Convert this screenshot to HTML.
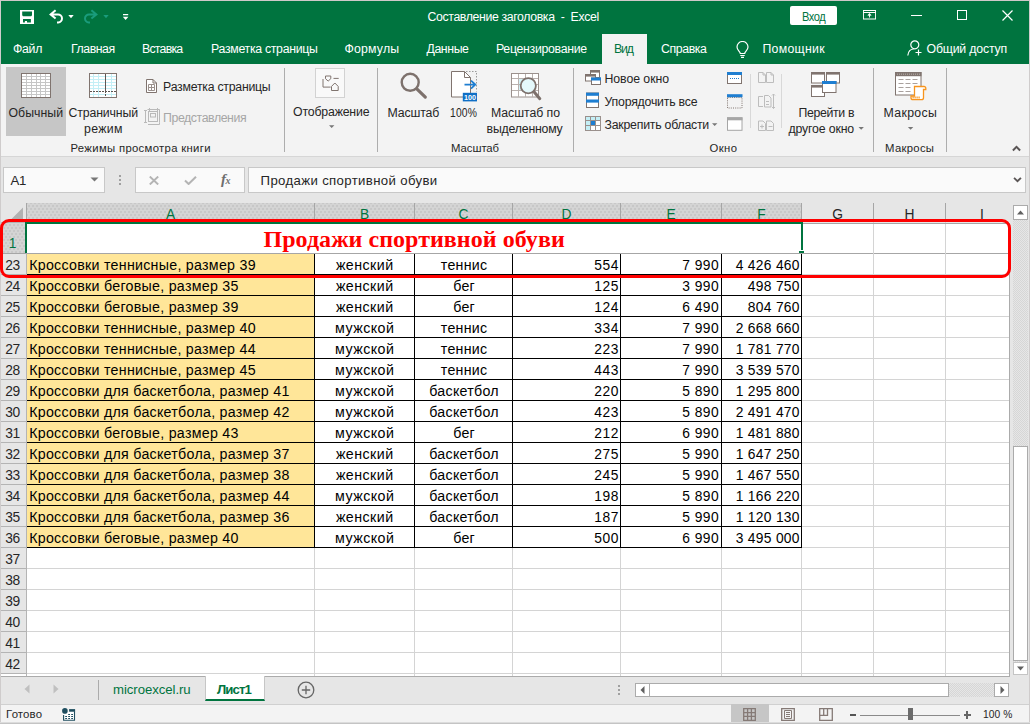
<!DOCTYPE html>
<html lang="ru"><head><meta charset="utf-8"><title>Составление заголовка - Excel</title>
<style>
html,body{margin:0;padding:0;}
body{width:1030px;height:724px;position:relative;overflow:hidden;background:#e6e6e6;font-family:"Liberation Sans",sans-serif;font-size:12.3px;color:#262626;}
.a,.t,svg{position:absolute;}
.t{white-space:nowrap;line-height:1;z-index:4;}
.a{box-sizing:border-box;}
#titlebar{left:0;top:0;width:1030px;height:64px;background:#00743f;}
#wb-top{left:0;top:0;width:1030px;height:1px;background:#cfc9c9;}
#wb-left{left:0;top:0;width:1px;height:724px;background:#cfcccc;}
#ribbon{left:0;top:64px;width:1030px;height:93px;background:#f3f3f3;border-bottom:1px solid #d6d6d6;}
#fbar{left:0;top:157px;width:1030px;height:47px;background:#e6e6e6;}
.vsep{width:1px;background:#adadad;top:68px;height:84px;}
.vsep2{width:1px;background:#d8d8d8;top:74px;height:54px;}
.box{background:#fff;border:1px solid #c8c8c8;}
.fb{background:#fafafa;}
/* grid */
.c{position:absolute;box-sizing:border-box;height:20px;line-height:23.2px;font-size:13.8px;letter-spacing:0.27px;color:#000;white-space:nowrap;overflow:hidden;transform:scaleX(1.03);}
.ca{left:27px;width:287px;padding-left:2.100px;transform-origin:0 0;}
.cb{left:315px;width:99px;text-align:center;text-indent:0.500px;letter-spacing:0.450px;}
.cc{left:415px;width:97px;text-align:center;text-indent:1.200px;}
.cd{left:513px;width:107px;text-align:right;padding-right:1.200px;letter-spacing:0.500px;transform:none;}
.ce{left:621px;width:100px;text-align:right;padding-right:1.800px;letter-spacing:0.500px;transform:none;}
.cf{left:722px;width:79px;text-align:right;padding-right:1.200px;letter-spacing:0.300px;transform:none;}
.rh{position:absolute;left:1px;width:23px;height:20px;line-height:23.2px;text-align:center;font-size:13.8px;color:#262626;letter-spacing:-0.3px;}
.ch{position:absolute;height:16px;line-height:23.4px;text-align:center;font-size:13.8px;overflow:hidden;}
.hl{position:absolute;height:1px;background:#d4d4d4;}
.vl{position:absolute;width:1px;background:#d4d4d4;}
.bl{background:#000;}
.dz{background-color:#d4d4d4;background-image:radial-gradient(circle,#bebebe 0.55px,rgba(190,190,190,0) 0.9px),radial-gradient(circle,#bebebe 0.55px,rgba(190,190,190,0) 0.9px);background-size:4px 6px,4px 6px;background-position:0 0,2px 3px;}
.dt{background:repeating-conic-gradient(#d6d6d6 0% 25%,#e6e6e6 0% 50%) 0 0/2px 2px;}

</style></head>
<body>
<!-- title bar + tab strip -->
<div class="a" id="titlebar"></div>
<div class="a" id="wb-top"></div>
<!-- quick access toolbar icons -->
<svg style="left:20px;top:10px" width="14" height="14" viewBox="20 10 14 14"><path fill="#fff" fill-rule="evenodd" d="M20 10h14v14h-14zM22.200 11.600v3.600l0.800 1.100h8.200l0.800-1.100v-3.600zM23 19.100v3.500h1.900v-1.600h2.100v1.600h3.900v-3.500z"/></svg>
<svg style="left:47px;top:8px" width="18" height="17" viewBox="47 8 18 17" fill="none" stroke="#fff" stroke-width="2"><path d="M55.600 10.200l-5 4.200 5 4.200M51 14.400h6.800a4 4 0 0 1 0.400 8h-1.200"/></svg>
<svg style="left:68px;top:15px" width="6" height="4" viewBox="0 0 6 4"><path d="M0.300 0h5.400L3 3.200z" fill="#fff"/></svg>
<svg style="left:83px;top:8px" width="18" height="17" viewBox="83 8 18 17" fill="none" stroke="#1a9c7c" stroke-width="2"><path d="M91.400 10.200l5 4.200-5 4.200M96 14.400h-6.800a4 4 0 0 0-0.400 8h1.200"/></svg>
<svg style="left:103px;top:15px" width="6" height="4" viewBox="0 0 6 4"><path d="M0.300 0h5.400L3 3.200z" fill="#1a9c7c"/></svg>
<svg style="left:122px;top:13px" width="7" height="8" viewBox="0 0 7 8"><path d="M1 1h5.200v1.300H1zM0.800 3.700h5.600L3.600 7z" fill="#fff"/></svg>
<!-- sign-in button -->
<div class="a" style="left:790px;top:6px;width:47px;height:19px;background:#fff;border-radius:2px;"></div>
<!-- window controls -->
<svg style="left:863px;top:10px" width="13" height="9.500" viewBox="0 0 15 10" preserveAspectRatio="none" fill="none" stroke="#fff" stroke-width="1.1"><path d="M0.5 0.5h14v9h-14zM0.500 2.6h14"/><path d="M7.500 8V4.300M5.600 5.900l1.900-1.900 1.900 1.900"/></svg>
<div class="a" style="left:911px;top:15px;width:11px;height:1.3px;background:#fff;"></div>
<div class="a" style="left:957px;top:10px;width:10px;height:10px;border:1.2px solid #fff;"></div>
<svg style="left:1002px;top:10px" width="11" height="11" viewBox="0 0 11 11" stroke="#fff" stroke-width="1.2"><path d="M0.500 0.500l10 10M10.500 0.500l-10 10"/></svg>
<!-- active tab -->
<div class="a" style="left:602px;top:34px;width:45px;height:31px;background:#f3f3f3;"></div>
<!-- lightbulb + share icons -->
<svg style="left:736px;top:41px" width="13" height="17" viewBox="0 0 13 17" fill="none" stroke="#fff" stroke-width="1.2"><path d="M4.300 12.500c0-2-3.300-3.300-3.300-6.500a5.500 5.500 0 0 1 11 0c0 3.200-3.300 4.500-3.300 6.500zM4.300 14.500h4.400M5 16.400h3"/></svg>
<svg style="left:907px;top:40px" width="16" height="16" viewBox="0 0 16 16" fill="none" stroke="#fff" stroke-width="1.2"><circle cx="7.800" cy="4.800" r="4"/><path d="M0.800 15.500c0.500-4 3-6.500 6-6.500M11.500 9.500v6M8.500 12.500h6"/></svg>
<!-- ribbon -->
<div class="a" id="ribbon"></div>
<div class="a" style="left:6px;top:67px;width:60px;height:69px;background:#c6c6c6;"></div>
<div class="a vsep" style="left:284px;"></div>
<div class="a vsep" style="left:377px;"></div>
<div class="a vsep" style="left:573px;"></div>
<div class="a vsep" style="left:873px;"></div>
<div class="a vsep" style="left:946px;"></div>
<div class="a vsep2" style="left:750px;"></div>
<div class="a vsep2" style="left:781px;"></div>
<svg style="left:0;top:64px" width="1030" height="93" viewBox="0 64 1030 93" fill="none">
<!-- normal view -->
<rect x="21.500" y="73.500" width="29" height="24" fill="#fff" stroke="#80746f"/>
<path d="M26.500 74v23M31.500 74v23M36.500 74v23M40.500 74v23M45.500 74v23M22 76.500h28M22 79.500h28M22 82.500h28M22 85.500h28M22 88.500h28M22 91.500h28M22 94.500h28" stroke="#c6c6c6"/>
<!-- page break view -->
<rect x="89.500" y="73.500" width="27" height="24" fill="#fff" stroke="#80746f"/>
<path d="M93.500 74v23M98.500 74v23M111.500 74v23M90 76.500h26M90 79.500h26M90 82.500h26M90 85.500h26M90 88.500h26M90 94.500h26" stroke="#c4eff6"/>
<path d="M105.500 74v17" stroke="#5f5551"/>
<path d="M105.500 91v6M90 91.500h26" stroke="#5f5551" stroke-dasharray="2 1"/>
<!-- page layout small -->
<path d="M146.500 79.500h6.500l3.500 3.500v9.500h-10z" fill="#fff" stroke="#80746f"/>
<path d="M153 79.500v3.500h3.500" stroke="#80746f"/>
<path d="M148.500 84.500h6v6h-6zM151.500 84.500v6M148.500 87.500h6" stroke="#9a908c"/>
<!-- custom views (disabled) -->
<g stroke="#b9b9b9"><rect x="148.500" y="111.500" width="9" height="10"/><rect x="150.500" y="113.500" width="5" height="3.500"/><path d="M145.500 110.500v12M144 110.500h3M144 122.500h3M147.500 109.500h12v13M149.500 108v3M157.500 108v3M148 124.500h11.500v-2"/></g>
<!-- show -->
<rect x="315.500" y="68.500" width="29" height="29" fill="#f9f9f9" stroke="#d2d2d2"/>
<path d="M325.500 76h5.300v2.700l-2.650 2.400-2.650-2.400zM333.500 78.400h5.200M323 79v8.100h7.600M331.500 90.500v-4.100l3.350-3.400 3.350 3.400v4.100z" stroke="#80746f"/>
<!-- zoom -->
<circle cx="410.200" cy="82.300" r="8.500" stroke="#7d716c" stroke-width="2.400"/>
<path d="M416.800 88.800l8.500 8.300" stroke="#7d716c" stroke-width="3.200" stroke-linecap="round"/>
<!-- 100% -->
<path d="M466 71.500h10.500v20" stroke="#9a9a9a" stroke-dasharray="1.500 1.500"/>
<path d="M451.500 71.500h13l6 6v19.500h-19z" fill="#fff" stroke="#80746f"/>
<path d="M464.500 71.500v6h6" stroke="#80746f"/>
<path d="M464.500 84.600h10.500M471 80.600l4.300 4-4.300 4" stroke="#1e7ed1" stroke-width="1.800"/>
<rect x="462.800" y="92.800" width="14.200" height="8.600" fill="#0f6fc6"/>
<text x="469.900" y="99.700" font-family="'Liberation Sans',sans-serif" font-size="7.200" font-weight="bold" fill="#fff" text-anchor="middle">100</text>
<!-- zoom to selection -->
<rect x="511.500" y="73.500" width="27" height="23.500" fill="#fff" stroke="#9a908c"/>
<rect x="519" y="79" width="13" height="11" fill="#d4f3f8"/>
<path d="M518.500 74v23M525.500 74v23M532.500 74v23M512 78.500h26M512 84.500h26M512 90.500h26" stroke="#b8b1ae"/>
<circle cx="528.300" cy="85.700" r="7.600" fill="#e4f8fb" stroke="#7d716c" stroke-width="1.800"/>
<path d="M534 91.700l5.800 7" stroke="#7d716c" stroke-width="3" stroke-linecap="round"/>
<!-- new window -->
<rect x="590.500" y="70.500" width="9" height="7" fill="#fff" stroke="#80746f"/><rect x="590" y="70" width="10" height="2.600" fill="#80746f"/>
<rect x="585.500" y="74.500" width="10" height="6.500" fill="#fff" stroke="#80746f"/><rect x="585" y="74" width="11" height="2.600" fill="#80746f"/>
<rect x="591.500" y="78" width="9" height="6.500" fill="#fff" stroke="#80746f"/><rect x="591" y="77.500" width="10" height="3" fill="#1e7ed1"/>
<!-- arrange all -->
<rect x="586.500" y="93" width="12" height="14.500" fill="#fff" stroke="#80746f"/><rect x="586" y="92.700" width="13" height="3.100" fill="#1e7ed1"/><rect x="586" y="99.500" width="13" height="3.100" fill="#1e7ed1"/>
<!-- freeze panes -->
<rect x="585.500" y="116.500" width="15" height="14" fill="#fff" stroke="#9a908c"/>
<path d="M586 117h14v3.500h-14zM586 120.500h4.500v9.500h-4.500z" fill="#c4eff6"/>
<rect x="591" y="121" width="4.500" height="4.500" fill="#1e7ed1"/>
<path d="M590.500 117v13M595.500 117v13M586 120.500h14M586 125.500h14" stroke="#9a908c"/>
<!-- split / hide / unhide -->
<rect x="727.500" y="72.500" width="14" height="11" fill="#fff" stroke="#80746f"/><rect x="727" y="72" width="15" height="3" fill="#1e7ed1"/><path d="M730 78.500h10" stroke="#1e7ed1" stroke-dasharray="1 1"/>
<rect x="727.500" y="97.500" width="14.500" height="10.500" stroke="#80746f" stroke-dasharray="1 1.200"/><rect x="727" y="94.200" width="15.500" height="3" fill="#1e7ed1"/>
<rect x="727.500" y="117.800" width="14.500" height="12.500" fill="#fff" stroke="#a6a6a6"/><rect x="727" y="117.300" width="15.500" height="3" fill="#a6a6a6"/>
<!-- side by side / sync / reset (disabled) -->
<g stroke="#bdbdbd"><path d="M758.500 72.500h4.500l2.500 2.500v7.500h-7zM766.500 72.500h4.500l2.500 2.500v7.500h-7zM763 72.500v2.500h2.500M771 72.500v2.500h2.500"/>
<path d="M763 96.500h-4.500v10h4.500M764.500 95.500h4l2.500 2.500v9h-6.500zM773.500 94v14.500M772 95.500l1.500-1.500 1.500 1.500M772 107l1.500 1.500 1.500-1.500M766 101.500h3M766 104.500h3"/>
<path d="M758.500 121h4.500l2.500 2.500v7h-7zM766.500 121h4.500l2.500 2.500v7h-7zM760 126.500h4M762 124.500v4M768.500 126.500h4"/></g>
<!-- switch windows -->
<rect x="811.500" y="72.500" width="13" height="10.500" fill="#fff" stroke="#80746f"/><rect x="811" y="72" width="14" height="2.600" fill="#80746f"/>
<rect x="826.500" y="72.500" width="13" height="10.500" fill="#fff" stroke="#80746f"/><rect x="826" y="72" width="14" height="2.600" fill="#80746f"/>
<rect x="811.500" y="85.500" width="13" height="11" fill="#fff" stroke="#80746f"/><rect x="811" y="85" width="14" height="2.600" fill="#80746f"/>
<rect x="822.500" y="81.500" width="13.500" height="11" fill="#fff" stroke="#80746f"/><rect x="822" y="81" width="14.500" height="3" fill="#1e7ed1"/>
<!-- macros -->
<rect x="895.500" y="72.500" width="25.500" height="22.500" fill="#fff" stroke="#80746f"/><rect x="895" y="72" width="26.500" height="4.200" fill="#80746f"/>
<path d="M897 74.200h23" stroke="#b8b1ae" stroke-dasharray="1 1"/>
<path d="M898.500 79.500h5M905.500 79.500h5M912.500 79.500h5M898.500 83.500h5M905.500 83.500h5M912.500 83.500h5M898.500 87.500h5M905.500 87.500h5M898.500 91.500h5M905.500 91.500h5" stroke="#a9a19e"/>
<path d="M914.500 86.500h9.500a1.800 1.800 0 0 1 1.800 1.800v1.200h-2.300v8.200a2 2 0 0 1-2 2h-8.500a2 2 0 0 1-2-2v-1.700h3.500z" fill="#fff" stroke="#f7941d" stroke-width="1.300"/>
<path d="M912.500 97.600h8" stroke="#f7941d" stroke-width="2" stroke-dasharray="1.200 0.800"/>
<!-- dropdown arrows -->
<path d="M329 125.200h5.400l-2.700 2.900zM712 123.200h5.400l-2.700 2.900zM858.500 126.900h5.400l-2.700 2.900zM907.900 126.900h5.400l-2.700 2.900z" fill="#777"/>
</svg>

<!-- formula bar -->
<div class="a" id="fbar"></div>
<div class="a box fb" style="left:3px;top:167px;width:102px;height:26px;"></div>
<svg style="left:90px;top:177px" width="9" height="5" viewBox="0 0 9 5"><path d="M0.500 0.500h8L4.500 4.500z" fill="#777"/></svg>
<div class="a" style="left:119px;top:175px;width:2px;height:2px;background:#a0a0a0;box-shadow:0 4px 0 #a0a0a0,0 8px 0 #a0a0a0;"></div>
<div class="a box fb" style="left:135px;top:167px;width:110px;height:26px;"></div>
<svg style="left:149px;top:176px" width="10" height="9" viewBox="0 0 10 9" stroke="#b4b4b4" stroke-width="1.900"><path d="M0.800 0.500l8.400 8M9.200 0.500l-8.400 8"/></svg>
<svg style="left:184px;top:176px" width="13" height="9" viewBox="0 0 13 9" fill="none" stroke="#b4b4b4" stroke-width="2"><path d="M1 4.500l3.600 3.500L12 0.800"/></svg>
<span class="t" style="left:221px;top:171.500px;font-family:'Liberation Serif',serif;font-style:italic;font-weight:bold;font-size:15px;color:#6e6e6e;letter-spacing:-0.500px;">f<span style="font-size:10px;">x</span></span>
<div class="a box fb" style="left:248px;top:167px;width:778px;height:26px;"></div>
<svg style="left:1013px;top:177px" width="9" height="6" viewBox="0 0 10 7" fill="none" stroke="#5a5555" stroke-width="2.200"><path d="M1 1l4 4 4-4"/></svg>
<!-- collapse ribbon chevron -->
<svg style="left:1012px;top:145px" width="9" height="6.500" viewBox="0 0 10 7" fill="none" stroke="#5a5555" stroke-width="2.200"><path d="M1 6l4-4 4 4"/></svg>
<!-- vertical scrollbar -->
<div class="a" style="left:1010px;top:204px;width:20px;height:472px;background:#e6e6e6;"></div>
<div class="a dt" style="left:1013px;top:220px;width:15px;height:442px;"></div>
<div class="a box" style="left:1013px;top:205px;width:15px;height:15px;border-color:#ababab;"></div>
<svg style="left:1017px;top:210px" width="7" height="5" viewBox="0 0 7 5"><path d="M0 4.500h7L3.500 0.500z" fill="#606060"/></svg>
<div class="a box" style="left:1013px;top:446px;width:15px;height:215px;border-color:#ababab;"></div>
<div class="a box" style="left:1013px;top:662px;width:15px;height:13px;border-color:#c4c4c4;"></div>
<svg style="left:1017px;top:666px" width="7" height="5" viewBox="0 0 7 5"><path d="M0 0.500h7L3.500 4.500z" fill="#606060"/></svg>
<!-- sheet tab bar -->
<div class="a" style="left:0;top:677px;width:1030px;height:27px;background:#e6e6e6;"></div>
<svg style="left:24px;top:684px" width="6" height="10" viewBox="0 0 6 10"><path d="M5.500 0.500v9L0.500 5z" fill="#c0c0c0"/></svg>
<svg style="left:53px;top:684px" width="6" height="10" viewBox="0 0 6 10"><path d="M0.500 0.500v9L5.500 5z" fill="#c0c0c0"/></svg>
<div class="a" style="left:98px;top:680px;width:1px;height:20px;background:#ababab;"></div>
<div class="a" style="left:205px;top:676px;width:60px;height:25px;z-index:3;background:#fff;border-bottom:2.600px solid #00743f;border-left:1px solid #c6c6c6;border-right:1px solid #c6c6c6;"></div>
<svg style="left:297px;top:681px" width="18" height="18" viewBox="0 0 18 18" fill="none" stroke="#666" stroke-width="1.300"><circle cx="9" cy="9" r="7.800"/><path d="M9 4.800v8.400M4.800 9h8.400"/></svg>
<!-- horizontal scrollbar -->
<div class="a" style="left:618px;top:685px;width:2px;height:2px;background:#a0a0a0;box-shadow:0 4px 0 #a0a0a0,0 8px 0 #a0a0a0;"></div>
<div class="a dt" style="left:649px;top:683px;width:346px;height:14px;"></div>
<div class="a box" style="left:635px;top:683px;width:15px;height:14px;border-color:#ababab;"></div>
<svg style="left:640px;top:686px" width="5" height="8" viewBox="0 0 5 8"><path d="M4.500 0v8L0.500 4z" fill="#606060"/></svg>
<div class="a box" style="left:649px;top:683px;width:300px;height:14px;border-color:#ababab;"></div>
<div class="a box" style="left:994px;top:683px;width:15px;height:14px;border-color:#ababab;"></div>
<svg style="left:1000px;top:686px" width="5" height="8" viewBox="0 0 5 8"><path d="M0.500 0v8L4.500 4z" fill="#606060"/></svg>
<!-- status bar -->
<div class="a" style="left:0;top:704px;width:1030px;height:20px;background:#f3f3f3;border-top:1px solid #d0d0d0;"></div>
<div class="a" style="left:731px;top:704px;width:38px;height:20px;background:#c6c6c6;"></div>
<svg style="left:62px;top:708px" width="14" height="13" viewBox="62 708 14 13"><path d="M63 712h12v8.500h-12z" fill="#fff"/><circle cx="64.900" cy="710.900" r="2.800" fill="#1f4e5f"/><path d="M69.100 709.100h6v2.600h-6z" fill="#1f4e5f"/><path d="M63.600 715v5.200h10.900v-9" fill="none" stroke="#1f4e5f" stroke-width="1.100"/><path d="M68.200 714.500h1.800M71.200 714.500h1.800M65.200 716.500h1.800M68.200 716.500h1.800M71.200 716.500h1.800M65.200 718.500h1.800M68.200 718.500h1.800M71.200 718.500h1.800" stroke="#1f4e5f" stroke-width="1"/></svg>
<svg style="left:743px;top:708px" width="13" height="13" viewBox="0 0 13 13" fill="none" stroke="#857a76" stroke-width="1.300"><path d="M0.700 0.700h11.600v11.600h-11.600zM4.600 0.700v11.600M8.400 0.700v11.600M0.700 4.600h11.600M0.700 8.400h11.600"/></svg>
<svg style="left:781px;top:708px" width="14" height="13" viewBox="0 0 14 13" fill="none" stroke="#857a76" stroke-width="1.300"><path d="M0.700 0.700h12.600v11.600h-12.600z"/><path d="M3.500 2.500h7v8h-7zM5 4.500h4M5 6.500h4M5 8.500h4" stroke-width="1"/></svg>
<svg style="left:819px;top:708px" width="14" height="13" viewBox="0 0 14 13" fill="none" stroke="#857a76" stroke-width="1.300"><path d="M0.700 0.700h12.600v11.600h-12.600zM0.700 7.300h7.800v-6.600M4.700 0.700v6.600"/></svg>
<div class="a" style="left:850px;top:714px;width:6px;height:2px;background:#555;"></div>
<div class="a" style="left:860px;top:715px;width:100px;height:1px;background:#8a8a8a;"></div>
<div class="a" style="left:908px;top:708px;width:5px;height:12px;background:#6b6b6b;"></div>
<div class="a" style="left:963.500px;top:714.200px;width:7.500px;height:1.600px;background:#666;"></div>
<div class="a" style="left:966.400px;top:711.200px;width:1.600px;height:7.700px;background:#666;"></div>


<!-- sheet -->
<div class="a" style="left:0;top:204px;width:1010px;height:473px;background:#fff;"></div>
<div class="a" style="left:0;top:203px;width:1010px;height:20px;background:#e6e6e6;"></div>
<div class="a dz" style="left:27px;top:203px;width:774px;height:19px;"></div>
<div class="a" style="left:0;top:222px;width:26px;height:452px;background:#e6e6e6;"></div>
<div class="a dz" style="left:0;top:222px;width:26px;height:31px;"></div>
<svg style="left:11px;top:207px" width="12" height="12" viewBox="0 0 12 12"><path d="M12 0.500V12H0.500Z" fill="#b2b2b2"/></svg>
<div class="a" style="left:27px;top:254px;width:287px;height:293px;background:#ffe699;"></div>
<div class="hl" style="left:0;top:253px;width:26px;background:#b4b4b4;"></div>
<div class="hl" style="left:0;top:253px;width:1010px;background:#a6a6a6;"></div>
<div class="hl" style="left:0;top:274px;width:26px;background:#b4b4b4;"></div>
<div class="hl bl" style="left:27px;top:274px;width:775px;"></div>
<div class="hl" style="left:802px;top:274px;width:208px;"></div>
<div class="hl" style="left:0;top:295px;width:26px;background:#b4b4b4;"></div>
<div class="hl bl" style="left:27px;top:295px;width:775px;"></div>
<div class="hl" style="left:802px;top:295px;width:208px;"></div>
<div class="hl" style="left:0;top:316px;width:26px;background:#b4b4b4;"></div>
<div class="hl bl" style="left:27px;top:316px;width:775px;"></div>
<div class="hl" style="left:802px;top:316px;width:208px;"></div>
<div class="hl" style="left:0;top:337px;width:26px;background:#b4b4b4;"></div>
<div class="hl bl" style="left:27px;top:337px;width:775px;"></div>
<div class="hl" style="left:802px;top:337px;width:208px;"></div>
<div class="hl" style="left:0;top:358px;width:26px;background:#b4b4b4;"></div>
<div class="hl bl" style="left:27px;top:358px;width:775px;"></div>
<div class="hl" style="left:802px;top:358px;width:208px;"></div>
<div class="hl" style="left:0;top:379px;width:26px;background:#b4b4b4;"></div>
<div class="hl bl" style="left:27px;top:379px;width:775px;"></div>
<div class="hl" style="left:802px;top:379px;width:208px;"></div>
<div class="hl" style="left:0;top:400px;width:26px;background:#b4b4b4;"></div>
<div class="hl bl" style="left:27px;top:400px;width:775px;"></div>
<div class="hl" style="left:802px;top:400px;width:208px;"></div>
<div class="hl" style="left:0;top:421px;width:26px;background:#b4b4b4;"></div>
<div class="hl bl" style="left:27px;top:421px;width:775px;"></div>
<div class="hl" style="left:802px;top:421px;width:208px;"></div>
<div class="hl" style="left:0;top:442px;width:26px;background:#b4b4b4;"></div>
<div class="hl bl" style="left:27px;top:442px;width:775px;"></div>
<div class="hl" style="left:802px;top:442px;width:208px;"></div>
<div class="hl" style="left:0;top:463px;width:26px;background:#b4b4b4;"></div>
<div class="hl bl" style="left:27px;top:463px;width:775px;"></div>
<div class="hl" style="left:802px;top:463px;width:208px;"></div>
<div class="hl" style="left:0;top:484px;width:26px;background:#b4b4b4;"></div>
<div class="hl bl" style="left:27px;top:484px;width:775px;"></div>
<div class="hl" style="left:802px;top:484px;width:208px;"></div>
<div class="hl" style="left:0;top:505px;width:26px;background:#b4b4b4;"></div>
<div class="hl bl" style="left:27px;top:505px;width:775px;"></div>
<div class="hl" style="left:802px;top:505px;width:208px;"></div>
<div class="hl" style="left:0;top:526px;width:26px;background:#b4b4b4;"></div>
<div class="hl bl" style="left:27px;top:526px;width:775px;"></div>
<div class="hl" style="left:802px;top:526px;width:208px;"></div>
<div class="hl" style="left:0;top:547px;width:26px;background:#b4b4b4;"></div>
<div class="hl bl" style="left:27px;top:547px;width:775px;"></div>
<div class="hl" style="left:802px;top:547px;width:208px;"></div>
<div class="hl" style="left:0;top:568px;width:26px;background:#b4b4b4;"></div>
<div class="hl" style="left:27px;top:568px;width:983px;"></div>
<div class="hl" style="left:0;top:589px;width:26px;background:#b4b4b4;"></div>
<div class="hl" style="left:27px;top:589px;width:983px;"></div>
<div class="hl" style="left:0;top:610px;width:26px;background:#b4b4b4;"></div>
<div class="hl" style="left:27px;top:610px;width:983px;"></div>
<div class="hl" style="left:0;top:631px;width:26px;background:#b4b4b4;"></div>
<div class="hl" style="left:27px;top:631px;width:983px;"></div>
<div class="hl" style="left:0;top:652px;width:26px;background:#b4b4b4;"></div>
<div class="hl" style="left:27px;top:652px;width:983px;"></div>
<div class="hl" style="left:0;top:673px;width:26px;background:#b4b4b4;"></div>
<div class="hl" style="left:27px;top:673px;width:983px;"></div>
<div class="vl" style="left:26px;top:203px;height:19px;background:#a6a6a6;"></div>
<div class="vl" style="left:26px;top:222px;height:454px;background:#b4b4b4;"></div>
<div class="vl" style="left:314px;top:203px;height:19px;background:#a6a6a6;"></div>
<div class="vl bl" style="left:314px;top:254px;height:294px;"></div>
<div class="vl" style="left:314px;top:548px;height:128px;"></div>
<div class="vl" style="left:414px;top:203px;height:19px;background:#a6a6a6;"></div>
<div class="vl bl" style="left:414px;top:254px;height:294px;"></div>
<div class="vl" style="left:414px;top:548px;height:128px;"></div>
<div class="vl" style="left:512px;top:203px;height:19px;background:#a6a6a6;"></div>
<div class="vl bl" style="left:512px;top:254px;height:294px;"></div>
<div class="vl" style="left:512px;top:548px;height:128px;"></div>
<div class="vl" style="left:620px;top:203px;height:19px;background:#a6a6a6;"></div>
<div class="vl bl" style="left:620px;top:254px;height:294px;"></div>
<div class="vl" style="left:620px;top:548px;height:128px;"></div>
<div class="vl" style="left:721px;top:203px;height:19px;background:#a6a6a6;"></div>
<div class="vl bl" style="left:721px;top:254px;height:294px;"></div>
<div class="vl" style="left:721px;top:548px;height:128px;"></div>
<div class="vl" style="left:801px;top:203px;height:19px;background:#a6a6a6;"></div>
<div class="vl bl" style="left:801px;top:254px;height:294px;"></div>
<div class="vl" style="left:801px;top:548px;height:128px;"></div>
<div class="vl" style="left:873px;top:203px;height:19px;background:#a6a6a6;"></div>
<div class="vl" style="left:873px;top:222px;height:454px;"></div>
<div class="vl" style="left:945px;top:203px;height:19px;background:#a6a6a6;"></div>
<div class="vl" style="left:945px;top:222px;height:454px;"></div>
<div class="vl" style="left:1009px;top:223px;height:453px;background:#ababab;"></div>
<div class="hl" style="left:0;top:676px;width:1010px;background:#ababab;"></div>
<div class="hl" style="left:803px;top:223px;width:207px;background:#a6a6a6;"></div>
<div class="hl" style="left:0;top:222px;width:25px;background:#b4b4b4;"></div>
<div class="a" style="left:25px;top:222px;width:778px;height:2px;background:#00743f;"></div>
<div class="a" style="left:25px;top:222px;width:2px;height:31px;background:#00743f;"></div>
<div class="a" style="left:801px;top:222px;width:2px;height:28px;background:#00743f;"></div>
<div class="a" style="left:799px;top:251px;width:5px;height:2px;background:#00743f;"></div>
<div class="ch" style="left:27px;top:203px;width:287px;color:#00743f;">A</div>
<div class="ch" style="left:315px;top:203px;width:99px;color:#00743f;">B</div>
<div class="ch" style="left:415px;top:203px;width:97px;color:#00743f;">C</div>
<div class="ch" style="left:513px;top:203px;width:107px;color:#00743f;">D</div>
<div class="ch" style="left:621px;top:203px;width:100px;color:#00743f;">E</div>
<div class="ch" style="left:722px;top:203px;width:79px;color:#00743f;">F</div>
<div class="ch" style="left:802px;top:203px;width:71px;color:#262626;">G</div>
<div class="ch" style="left:874px;top:203px;width:71px;color:#262626;">H</div>
<div class="ch" style="left:946px;top:203px;width:72px;color:#262626;">I</div>
<div class="rh" style="top:232px;color:#00743f;">1</div>
<div class="rh" style="top:254px;">23</div>
<div class="rh" style="top:275px;">24</div>
<div class="rh" style="top:296px;">25</div>
<div class="rh" style="top:317px;">26</div>
<div class="rh" style="top:338px;">27</div>
<div class="rh" style="top:359px;">28</div>
<div class="rh" style="top:380px;">29</div>
<div class="rh" style="top:401px;">30</div>
<div class="rh" style="top:422px;">31</div>
<div class="rh" style="top:443px;">32</div>
<div class="rh" style="top:464px;">33</div>
<div class="rh" style="top:485px;">34</div>
<div class="rh" style="top:506px;">35</div>
<div class="rh" style="top:527px;">36</div>
<div class="rh" style="top:548px;">37</div>
<div class="rh" style="top:569px;">38</div>
<div class="rh" style="top:590px;">39</div>
<div class="rh" style="top:611px;">40</div>
<div class="rh" style="top:632px;">41</div>
<div class="rh" style="top:653px;">42</div>
<div class="c ca" style="top:254px;">Кроссовки теннисные, размер 39</div>
<div class="c cb" style="top:254px;">женский</div>
<div class="c cc" style="top:254px;">теннис</div>
<div class="c cd" style="top:254px;">554</div>
<div class="c ce" style="top:254px;">7 990</div>
<div class="c cf" style="top:254px;">4 426 460</div>
<div class="c ca" style="top:275px;">Кроссовки беговые, размер 35</div>
<div class="c cb" style="top:275px;">женский</div>
<div class="c cc" style="top:275px;">бег</div>
<div class="c cd" style="top:275px;">125</div>
<div class="c ce" style="top:275px;">3 990</div>
<div class="c cf" style="top:275px;">498 750</div>
<div class="c ca" style="top:296px;">Кроссовки беговые, размер 39</div>
<div class="c cb" style="top:296px;">женский</div>
<div class="c cc" style="top:296px;">бег</div>
<div class="c cd" style="top:296px;">124</div>
<div class="c ce" style="top:296px;">6 490</div>
<div class="c cf" style="top:296px;">804 760</div>
<div class="c ca" style="top:317px;">Кроссовки теннисные, размер 40</div>
<div class="c cb" style="top:317px;">мужской</div>
<div class="c cc" style="top:317px;">теннис</div>
<div class="c cd" style="top:317px;">334</div>
<div class="c ce" style="top:317px;">7 990</div>
<div class="c cf" style="top:317px;">2 668 660</div>
<div class="c ca" style="top:338px;">Кроссовки теннисные, размер 44</div>
<div class="c cb" style="top:338px;">мужской</div>
<div class="c cc" style="top:338px;">теннис</div>
<div class="c cd" style="top:338px;">223</div>
<div class="c ce" style="top:338px;">7 990</div>
<div class="c cf" style="top:338px;">1 781 770</div>
<div class="c ca" style="top:359px;">Кроссовки теннисные, размер 45</div>
<div class="c cb" style="top:359px;">мужской</div>
<div class="c cc" style="top:359px;">теннис</div>
<div class="c cd" style="top:359px;">443</div>
<div class="c ce" style="top:359px;">7 990</div>
<div class="c cf" style="top:359px;">3 539 570</div>
<div class="c ca" style="top:380px;">Кроссовки для баскетбола, размер 41</div>
<div class="c cb" style="top:380px;">мужской</div>
<div class="c cc" style="top:380px;">баскетбол</div>
<div class="c cd" style="top:380px;">220</div>
<div class="c ce" style="top:380px;">5 890</div>
<div class="c cf" style="top:380px;">1 295 800</div>
<div class="c ca" style="top:401px;">Кроссовки для баскетбола, размер 42</div>
<div class="c cb" style="top:401px;">мужской</div>
<div class="c cc" style="top:401px;">баскетбол</div>
<div class="c cd" style="top:401px;">423</div>
<div class="c ce" style="top:401px;">5 890</div>
<div class="c cf" style="top:401px;">2 491 470</div>
<div class="c ca" style="top:422px;">Кроссовки беговые, размер 43</div>
<div class="c cb" style="top:422px;">мужской</div>
<div class="c cc" style="top:422px;">бег</div>
<div class="c cd" style="top:422px;">212</div>
<div class="c ce" style="top:422px;">6 990</div>
<div class="c cf" style="top:422px;">1 481 880</div>
<div class="c ca" style="top:443px;">Кроссовки для баскетбола, размер 37</div>
<div class="c cb" style="top:443px;">женский</div>
<div class="c cc" style="top:443px;">баскетбол</div>
<div class="c cd" style="top:443px;">275</div>
<div class="c ce" style="top:443px;">5 990</div>
<div class="c cf" style="top:443px;">1 647 250</div>
<div class="c ca" style="top:464px;">Кроссовки для баскетбола, размер 38</div>
<div class="c cb" style="top:464px;">женский</div>
<div class="c cc" style="top:464px;">баскетбол</div>
<div class="c cd" style="top:464px;">245</div>
<div class="c ce" style="top:464px;">5 990</div>
<div class="c cf" style="top:464px;">1 467 550</div>
<div class="c ca" style="top:485px;">Кроссовки для баскетбола, размер 44</div>
<div class="c cb" style="top:485px;">мужской</div>
<div class="c cc" style="top:485px;">баскетбол</div>
<div class="c cd" style="top:485px;">198</div>
<div class="c ce" style="top:485px;">5 890</div>
<div class="c cf" style="top:485px;">1 166 220</div>
<div class="c ca" style="top:506px;">Кроссовки для баскетбола, размер 36</div>
<div class="c cb" style="top:506px;">женский</div>
<div class="c cc" style="top:506px;">баскетбол</div>
<div class="c cd" style="top:506px;">187</div>
<div class="c ce" style="top:506px;">5 990</div>
<div class="c cf" style="top:506px;">1 120 130</div>
<div class="c ca" style="top:527px;">Кроссовки беговые, размер 40</div>
<div class="c cb" style="top:527px;">мужской</div>
<div class="c cc" style="top:527px;">бег</div>
<div class="c cd" style="top:527px;">500</div>
<div class="c ce" style="top:527px;">6 990</div>
<div class="c cf" style="top:527px;">3 495 000</div>
<!-- labels -->
<span class="t" style="left:427.5px;top:11.19px;font-size:12.3px;color:#fff;letter-spacing:-0.366px;white-space:pre;">Составление заголовка  -  Excel</span>
<span class="t" style="left:802.0px;top:11.19px;font-size:12.3px;color:#00743f;letter-spacing:-0.480px;transform:scaleX(0.9);transform-origin:0 0;">Вход</span>
<span class="t" style="left:13.0px;top:43.09px;font-size:12.3px;color:#fff;letter-spacing:-0.300px;">Файл</span>
<span class="t" style="left:71.0px;top:43.09px;font-size:12.3px;color:#fff;letter-spacing:-0.450px;">Главная</span>
<span class="t" style="left:142.0px;top:43.09px;font-size:12.3px;color:#fff;letter-spacing:-0.750px;">Вставка</span>
<span class="t" style="left:211.0px;top:43.09px;font-size:12.3px;color:#fff;letter-spacing:-0.292px;">Разметка страницы</span>
<span class="t" style="left:344.5px;top:43.09px;font-size:12.3px;color:#fff;letter-spacing:0.180px;">Формулы</span>
<span class="t" style="left:426.5px;top:43.09px;font-size:12.3px;color:#fff;letter-spacing:-0.396px;">Данные</span>
<span class="t" style="left:496.0px;top:43.09px;font-size:12.3px;color:#fff;letter-spacing:-0.291px;">Рецензирование</span>
<span class="t" style="left:661.0px;top:43.09px;font-size:12.3px;color:#fff;letter-spacing:-0.390px;">Справка</span>
<span class="t" style="left:762.5px;top:43.09px;font-size:12.3px;color:#fff;letter-spacing:0.283px;">Помощник</span>
<span class="t" style="left:926.5px;top:43.09px;font-size:12.3px;color:#fff;letter-spacing:-0.180px;">Общий доступ</span>
<span class="t" style="left:614.1px;top:43.09px;font-size:12.3px;color:#00743f;letter-spacing:-1.260px;">Вид</span>
<span class="t" style="left:8.5px;top:106.89px;font-size:12.3px;color:#262626;letter-spacing:0.030px;">Обычный</span>
<span class="t" style="left:68.5px;top:106.89px;font-size:12.3px;color:#262626;letter-spacing:-0.140px;">Страничный</span>
<span class="t" style="left:84.1px;top:122.99px;font-size:12.3px;color:#262626;letter-spacing:0.315px;">режим</span>
<span class="t" style="left:163.1px;top:80.99px;font-size:12.3px;color:#262626;letter-spacing:-0.247px;">Разметка страницы</span>
<span class="t" style="left:163.1px;top:112.09px;font-size:12.3px;color:#a6a6a6;letter-spacing:-0.420px;">Представления</span>
<span class="t" style="left:70.5px;top:143.03px;font-size:11.3px;color:#262626;letter-spacing:0.334px;">Режимы просмотра книги</span>
<span class="t" style="left:293.1px;top:105.59px;font-size:12.3px;color:#262626;letter-spacing:-0.180px;">Отображение</span>
<span class="t" style="left:387.6px;top:106.89px;font-size:12.3px;color:#262626;letter-spacing:-0.150px;">Масштаб</span>
<span class="t" style="left:450.0px;top:106.89px;font-size:12.3px;color:#262626;letter-spacing:0.180px;transform:scaleX(0.84);transform-origin:0 0;">100%</span>
<span class="t" style="left:451.1px;top:143.03px;font-size:11.3px;color:#262626;letter-spacing:-0.060px;">Масштаб</span>
<span class="t" style="left:491.0px;top:106.89px;font-size:12.3px;color:#262626;letter-spacing:-0.060px;">Масштаб по</span>
<span class="t" style="left:486.6px;top:122.99px;font-size:12.3px;color:#262626;letter-spacing:-0.198px;">выделенному</span>
<span class="t" style="left:604.5px;top:73.19px;font-size:12.3px;color:#262626;letter-spacing:-0.060px;">Новое окно</span>
<span class="t" style="left:604.5px;top:95.99px;font-size:12.3px;color:#262626;letter-spacing:-0.206px;">Упорядочить все</span>
<span class="t" style="left:604.5px;top:118.69px;font-size:12.3px;color:#262626;letter-spacing:-0.225px;">Закрепить области</span>
<span class="t" style="left:709.5px;top:143.03px;font-size:11.3px;color:#262626;letter-spacing:0.420px;">Окно</span>
<span class="t" style="left:798.5px;top:106.89px;font-size:12.3px;color:#262626;letter-spacing:-0.338px;">Перейти в</span>
<span class="t" style="left:788.4px;top:122.99px;font-size:12.3px;color:#262626;letter-spacing:-0.144px;">другое окно</span>
<span class="t" style="left:883.6px;top:106.89px;font-size:12.3px;color:#262626;letter-spacing:0.330px;">Макросы</span>
<span class="t" style="left:885.1px;top:143.03px;font-size:11.3px;color:#262626;letter-spacing:0.300px;">Макросы</span>
<span class="t" style="left:10.5px;top:174.43px;font-size:13.2px;color:#262626;letter-spacing:-0.360px;">A1</span>
<span class="t" style="left:260.6px;top:174.43px;font-size:13.2px;color:#262626;letter-spacing:0.352px;">Продажи спортивной обуви</span>
<span class="t" style="left:113.0px;top:682.93px;font-size:13.2px;color:#00743f;letter-spacing:-0.060px;">microexcel.ru</span>
<span class="t" style="left:217.0px;top:682.93px;font-size:13.2px;color:#00743f;font-weight:bold;letter-spacing:-0.900px;">Лист1</span>
<span class="t" style="left:6.1px;top:708.65px;font-size:11.4px;color:#262626;letter-spacing:0.144px;">Готово</span>
<span class="t" style="left:982.5px;top:708.65px;font-size:11.4px;color:#262626;letter-spacing:0.090px;transform:scaleX(0.9);transform-origin:0 0;">100 %</span>
<span class="t" style="left:263.5px;top:227.30px;font-size:24px;color:#ff0000;font-weight:bold;font-family:'Liberation Serif', serif;letter-spacing:0.039px;">Продажи спортивной обуви</span>
<!-- window border -->
<div class="a" id="wb-left"></div>
<div class="a" style="left:1029px;top:1px;width:1px;height:723px;background:#cfcccc;"></div>
<div class="a" style="left:0;top:722px;width:1030px;height:2px;background:#c4c4c4;border-top:1px solid #dcdcdc;"></div>
<!-- red highlight frame -->
<div class="a" style="left:0;top:219px;width:1011px;height:59px;border:3px solid #ff0000;border-radius:9px;"></div>

</body></html>
